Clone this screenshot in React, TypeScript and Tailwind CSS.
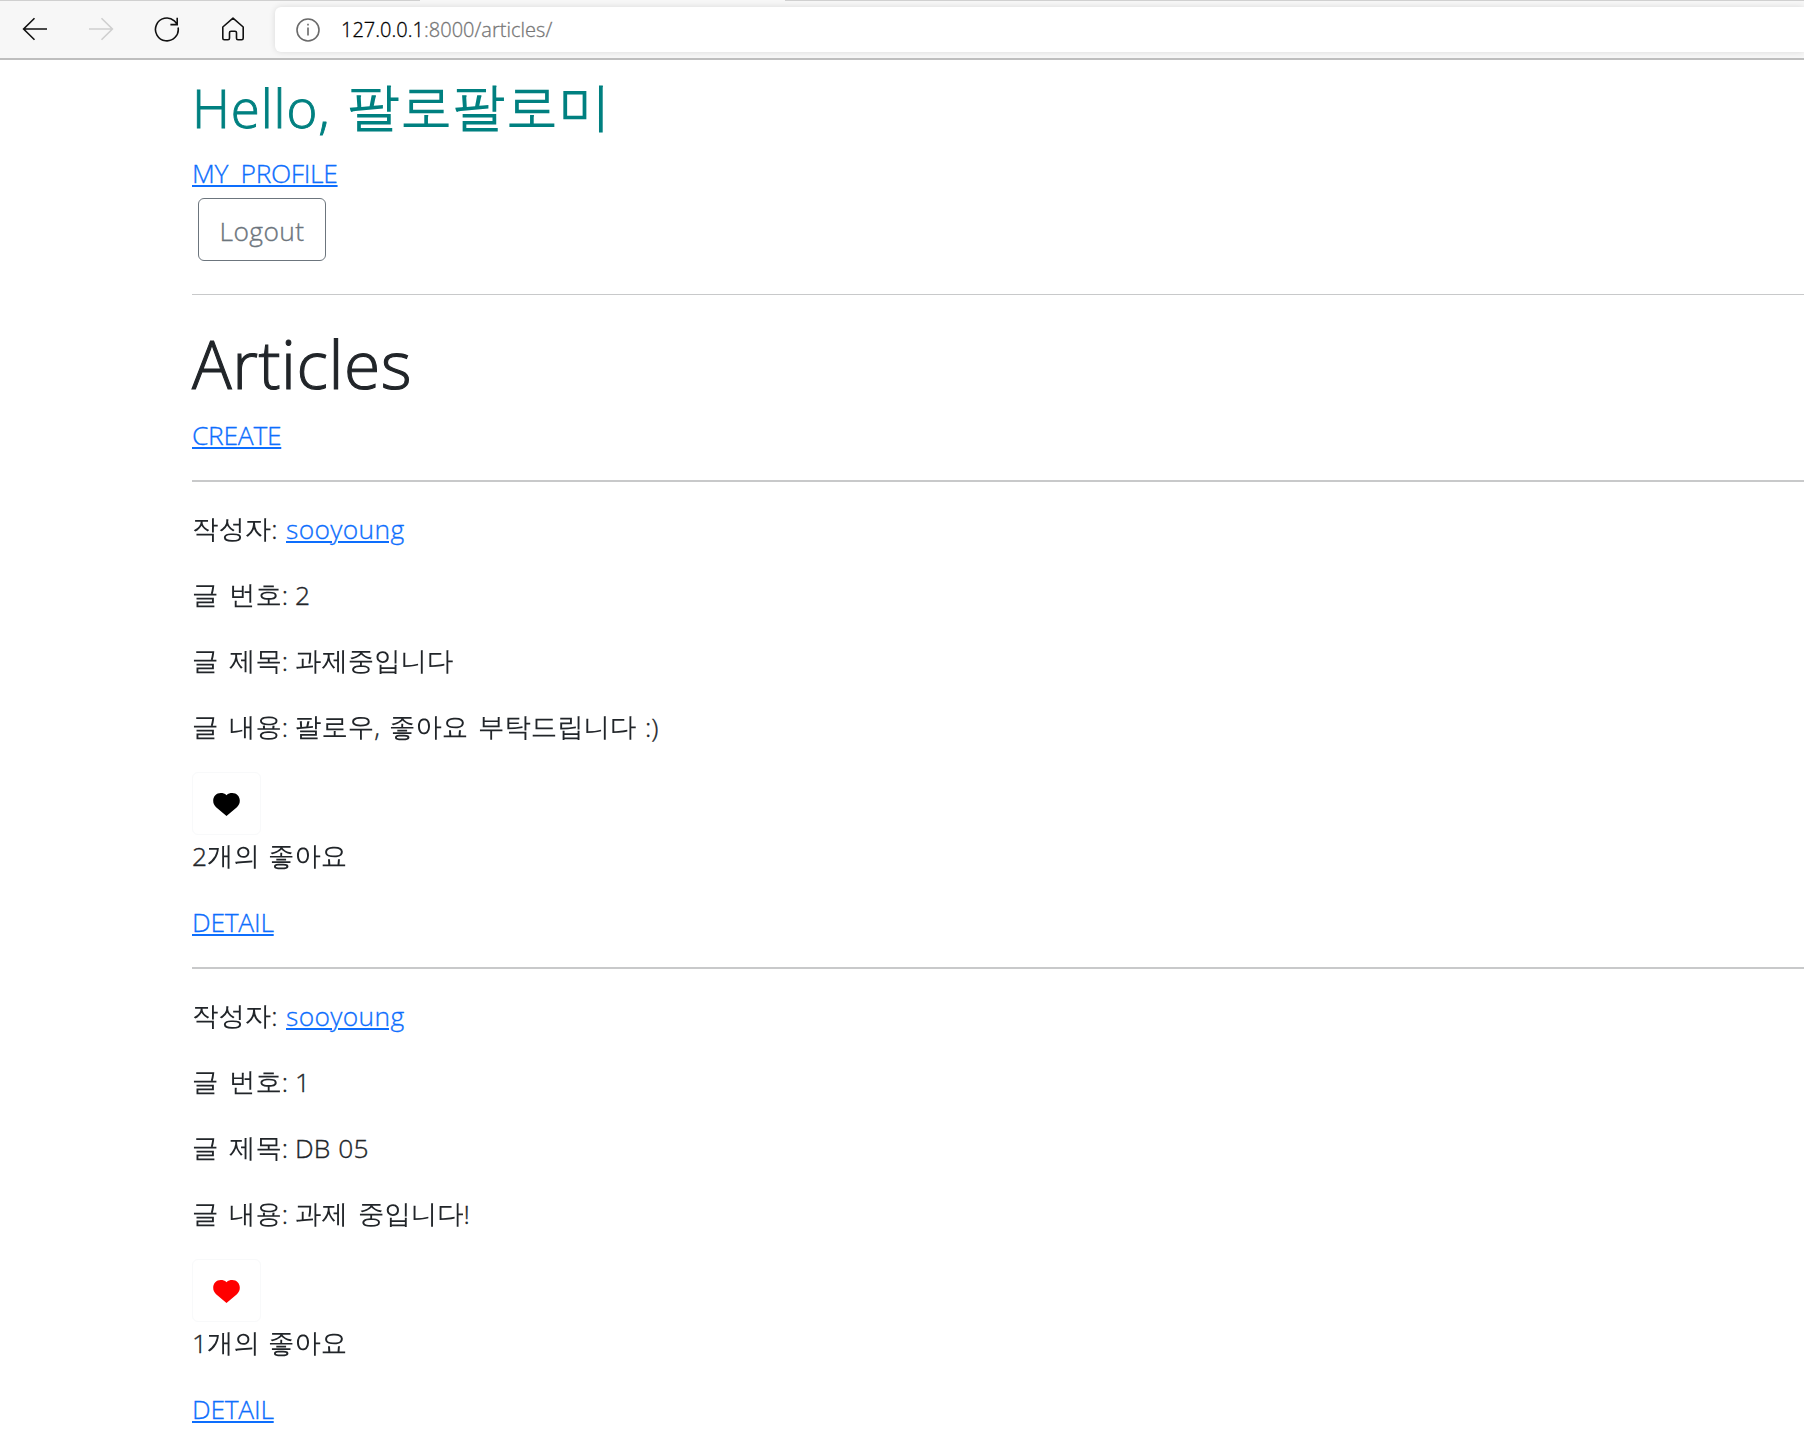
import type { ReactNode } from 'react';

function Line({ children, className = '' }: { children: ReactNode; className?: string }) {
  return <p className={`flex h-[40px] items-baseline whitespace-pre leading-[42px] ${className}`}>{children}</p>;
}

function Hangul({ children, className = '' }: { children: ReactNode; className?: string }) {
  return <span className={`inline-block -translate-y-[1.5px] ${className}`}>{children}</span>;
}

function Latin({ children, className = '' }: { children: ReactNode; className?: string }) {
  return <span className={`[-webkit-text-stroke:0.35px_currentColor] ${className}`}>{children}</span>;
}

function TextLink({ children, className = '' }: { children: ReactNode; className?: string }) {
  return (
    <a
      href="#"
      className={`text-[#0d6efd] underline decoration-2 underline-offset-2 [-webkit-text-stroke:0.3px_currentColor] ${className}`}
    >
      {children}
    </a>
  );
}

function Field({ label, children }: { label: string; children: ReactNode }) {
  return (
    <Line className="mb-[26px]">
      <Hangul className="w-[37px]">글</Hangul>
      <span className="w-[66px]">
        <Hangul>{label}</Hangul>
        <Latin>:</Latin>
      </span>
      {children}
    </Line>
  );
}

type ArticleData = { id: number; title: ReactNode; content: ReactNode; likes: number; liked: boolean };

const articles: ArticleData[] = [
  {
    id: 2,
    title: <Hangul>과제중입니다</Hangul>,
    content: (
      <>
        <span className="w-[94px]">
          <Hangul>팔로우</Hangul>
          <Latin>,</Latin>
        </span>
        <Hangul className="w-[89px]">좋아요</Hangul>
        <Hangul className="w-[167px]">부탁드립니다</Hangul>
        <Latin>:)</Latin>
      </>
    ),
    likes: 2,
    liked: false,
  },
  {
    id: 1,
    title: <Latin className="tracking-[0.1px] [word-spacing:1px]">DB 05</Latin>,
    content: (
      <>
        <Hangul className="w-[63px]">과제</Hangul>
        <Hangul>중입니다</Hangul>
        <Latin>!</Latin>
      </>
    ),
    likes: 1,
    liked: true,
  },
];

function Article({ article }: { article: ArticleData }) {
  return (
    <article className="h-[487px] border-t-2 border-[#c8c9ca] pt-[26px]">
      <Line className="mb-[26px]">
        <span className="w-[94px]">
          <Hangul>작성자</Hangul>
          <Latin>:</Latin>
        </span>
        <TextLink className="tracking-[0.35px]">sooyoung</TextLink>
      </Line>
      <Field label="번호">
        <Latin>{article.id}</Latin>
      </Field>
      <Field label="제목">{article.title}</Field>
      <Field label="내용">{article.content}</Field>
      <button className="flex h-[63px] w-[69px] items-center justify-center rounded-md border border-[#f8f9fa]">
        <svg viewBox="0 0 27 23" className={`mt-[2px] h-[23px] w-[27px] ${article.liked ? 'fill-[#ff0000]' : 'fill-black'}`}>
          <path d="M13.500 2.200C11.800.6 9.900.1 7.800.1 3.300.1.2 3.400.2 7.800c0 2.700 1.100 4.700 2.900 6.400L13.500 23l10.400-8.800c1.800-1.700 2.900-3.700 2.900-6.400 0-4.400-3.100-7.700-7.600-7.700-2.100 0-4 .5-5.700 2.100Z" />
        </svg>
      </button>
      <Line className="mb-[26px]">
        <span className="w-[76px]">
          <Latin>{article.likes}</Latin>
          <Hangul>개의</Hangul>
        </span>
        <Hangul>좋아요</Hangul>
      </Line>
      <Line>
        <TextLink className="tracking-[-0.23px]">DETAIL</TextLink>
      </Line>
    </article>
  );
}

function BrowserBar() {
  return (
    <header className="flex h-[60px] flex-col border-b-2 border-[#bebebe] bg-[#f7f7f7] font-['Open_Sans',sans-serif]">
      <div className="flex h-px justify-between">
        <div className="w-[420px] bg-[#d0d0d0]" />
        <div className="w-[1019px] bg-[#d0d0d0]" />
      </div>
      <div className="flex h-[57px]">
        <nav className="flex w-[275px] pt-[16px] pl-[22px]">
          <svg viewBox="0 0 26 24" className="mr-[40px] h-[24px] w-[26px] fill-none stroke-[#111] stroke-[1.6]">
            <path d="M25 12H2M12.500 1.200 1.600 12l10.900 10.800" />
          </svg>
          <svg viewBox="0 0 26 24" className="mr-[40px] h-[24px] w-[26px] fill-none stroke-[#cfcfcf] stroke-[1.6]">
            <path d="M1 12h23M13.500 1.200 24.400 12 13.500 22.800" />
          </svg>
          <svg viewBox="0 0 26 26" className="mr-[41px] h-[26px] w-[26px] fill-none stroke-[#111] stroke-[1.6]">
            <path d="M24.100 10.500A11.400 11.400 0 1 1 20.300 3.800L23 7M23.200.8v6.800h-6.800" />
          </svg>
          <svg viewBox="0 0 24 24" className="h-[24px] w-[24px] fill-none stroke-[#111] stroke-[1.6] [stroke-linejoin:round]">
            <path d="M12 1.200 1.800 10V21.300q0 1.500 1.500 1.500H7q1.500 0 1.500-1.500V15.800q0-1.500 1.500-1.500h4q1.500 0 1.500 1.500v5.500q0 1.500 1.500 1.500h3.700q1.500 0 1.500-1.500V10Z" />
          </svg>
        </nav>
        <div className="mt-[6px] flex h-[45px] flex-1 items-center rounded-l-md bg-white pl-[21px] shadow-[0_0_6px_rgba(0,0,0,0.12)]">
          <svg viewBox="0 0 24 24" className="h-[24px] w-[24px] fill-none stroke-[#6a6a6a] stroke-[1.6]">
            <circle cx="12" cy="12" r="11" />
            <path d="M12 9.500v8M12 5.800v1.800" />
          </svg>
          <span className="ml-[21px] text-[20px] font-light tracking-[0.02px] text-[#767676] [-webkit-text-stroke:0.3px_currentColor]">
            <span className="text-black">127.0.0.1</span>:8000/articles/
          </span>
        </div>
      </div>
    </header>
  );
}

export default function App() {
  return (
    <div className="h-[1452px] overflow-hidden bg-white font-['Open_Sans','WenQuanYi_Zen_Hei','Noto_Sans_CJK_KR',sans-serif] text-[26.4px] font-light text-[#212529]">
      <BrowserBar />
      <main className="pl-[192px]">
        <h2 className="flex h-[92px] items-baseline whitespace-pre pt-[16px] text-[52.8px] leading-[64px] text-[#008080]">
          <span className="w-[155px] tracking-[0.9px] [-webkit-text-stroke:0.9px_currentColor]">Hello,</span>
          <span className="-translate-y-[3px]">팔로팔로미</span>
        </h2>
        <Line>
          <TextLink className="tracking-[-0.33px] [word-spacing:6px]">MY PROFILE</TextLink>
        </Line>
        <button className="mt-[6px] ml-[6px] flex h-[63px] w-[128px] items-center justify-center rounded-md border border-[#6c757d] pt-[4px] tracking-[0.4px] text-[#6c757d]">
          <Latin>Logout</Latin>
        </button>
        <hr className="mt-[33px] border-[#c8c9ca]" />
        <h1 className="mt-[28px] h-[91px] text-[66px] leading-[80px] tracking-[0.55px] [-webkit-text-stroke:1.1px_currentColor]">
          Articles
        </h1>
        <Line className="mb-[26px]">
          <TextLink className="tracking-[-0.27px]">CREATE</TextLink>
        </Line>
        {articles.map((a) => (
          <Article key={a.id} article={a} />
        ))}
      </main>
    </div>
  );
}
